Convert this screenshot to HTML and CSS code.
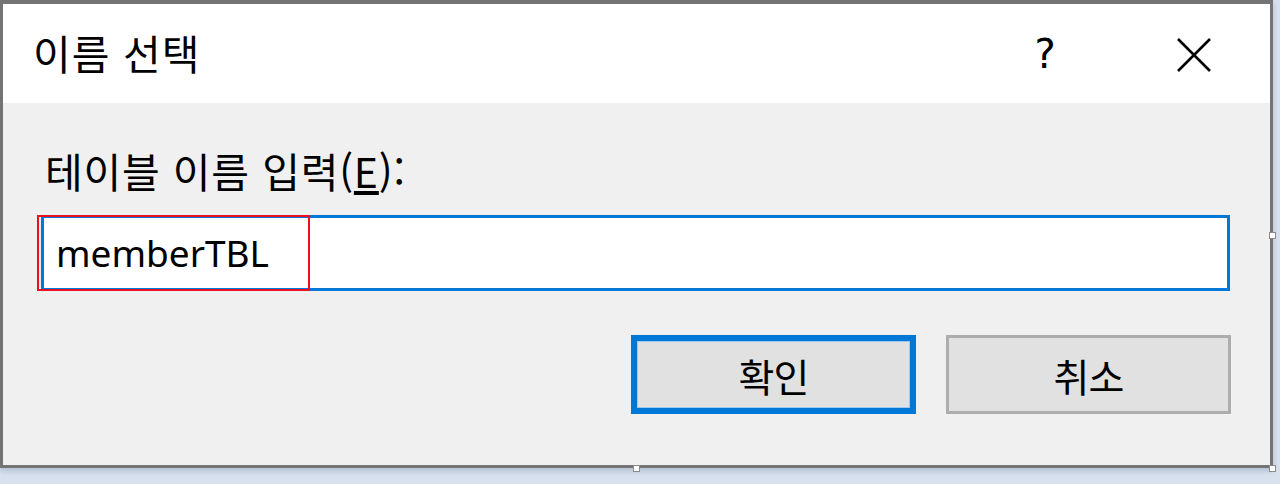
FILE: index.html
```html
<!DOCTYPE html>
<html lang="ko">
<head>
    <meta charset="UTF-8">
    <title>이름 선택</title>
    <link rel="stylesheet" href="styles.css">
</head>
<body>
    <div class="window">
        <div class="titlebar">
            <span class="title">이름 선택</span>
            <span class="help">?</span>
            <span class="close">
                <svg width="36" height="36" viewBox="0 0 36 36">
                    <path d="M2 2 L34 34 M34 2 L2 34" stroke="#000" stroke-width="2.6" fill="none"/>
                </svg>
            </span>
        </div>
        <div class="content">
            <div class="label">테이블 이름 입력(<u>E</u>):</div>
            <div class="input">
                <span class="value">memberTBL</span>
                <div class="focus-box"></div>
            </div>
            <div class="buttons">
                <div class="btn btn-default">확인</div>
                <div class="btn">취소</div>
            </div>
        </div>
        <div class="handle handle-right"></div>
        <div class="handle handle-bottom"></div>
        <div class="handle handle-corner"></div>
    </div>
</body>
</html>
```

FILE: styles.css
```css
body {
    margin: 0;
    background: #d8e2ef;
    font-family: "Noto Sans CJK KR", "Noto Sans", sans-serif;
    color: #000;
    height: 484px;
    overflow: hidden;
}
.window {
    position: relative;
    width: 1273px;
    height: 468px;
    box-sizing: border-box;
    border: 3px solid #747474;
    border-top-width: 4px;
    background: #f0f0f0;
    box-shadow: 0 3px 6px rgba(60, 80, 120, 0.25);
    display: flex;
    flex-direction: column;
}
.titlebar {
    height: 99px;
    background: #fff;
    display: flex;
    align-items: center;
    padding-left: 30px;
    padding-right: 46px;
}
.title {
    font-size: 41px;
    letter-spacing: 1px;
    margin-top: -4px;
}
.help {
    margin-left: auto;
    width: 60px;
    text-align: center;
    font-family: "DejaVu Sans", sans-serif;
    font-size: 40px;
    line-height: 1;
}
.close {
    width: 60px;
    margin-left: 89px;
    display: flex;
    justify-content: center;
    margin-top: 2px;
}
.content {
    padding: 40px 40px 0 34px;
}
.label {
    font-size: 41px;
    line-height: 54px;
    letter-spacing: 0.8px;
    margin-left: 8px;
}
.input {
    position: relative;
    margin-top: 18px;
    margin-left: 4px;
    height: 76px;
    box-sizing: border-box;
    border: 3px solid #0078d7;
    background: #fff;
    display: flex;
    align-items: center;
    padding-left: 12px;
}
.value {
    font-family: "Noto Sans", sans-serif;
    font-size: 37px;
    margin-top: -2px;
}
.focus-box {
    position: absolute;
    left: -7px;
    top: -3px;
    width: 273px;
    height: 76px;
    box-sizing: border-box;
    border: 2px solid #e81123;
}
.buttons {
    display: flex;
    justify-content: flex-end;
    gap: 30px;
    margin-top: 44px;
    margin-right: -1px;
}
.btn {
    width: 285px;
    height: 79px;
    box-sizing: border-box;
    border: 3px solid #adadad;
    background: #e1e1e1;
    display: flex;
    align-items: center;
    justify-content: center;
    font-size: 39px;
    letter-spacing: -1px;
}
.btn-default {
    border: 6px solid #0078d7;
    box-shadow: inset 0 0 0 1px #9cc9ef;
}
.handle {
    position: absolute;
    width: 5px;
    height: 5px;
    background: #fff;
    border: 1px solid #8a8a8a;
}
.handle-right {
    right: -6px;
    top: 228px;
}
.handle-bottom {
    left: 630px;
    bottom: -7px;
}
.handle-corner {
    right: -6px;
    bottom: -7px;
}
```
